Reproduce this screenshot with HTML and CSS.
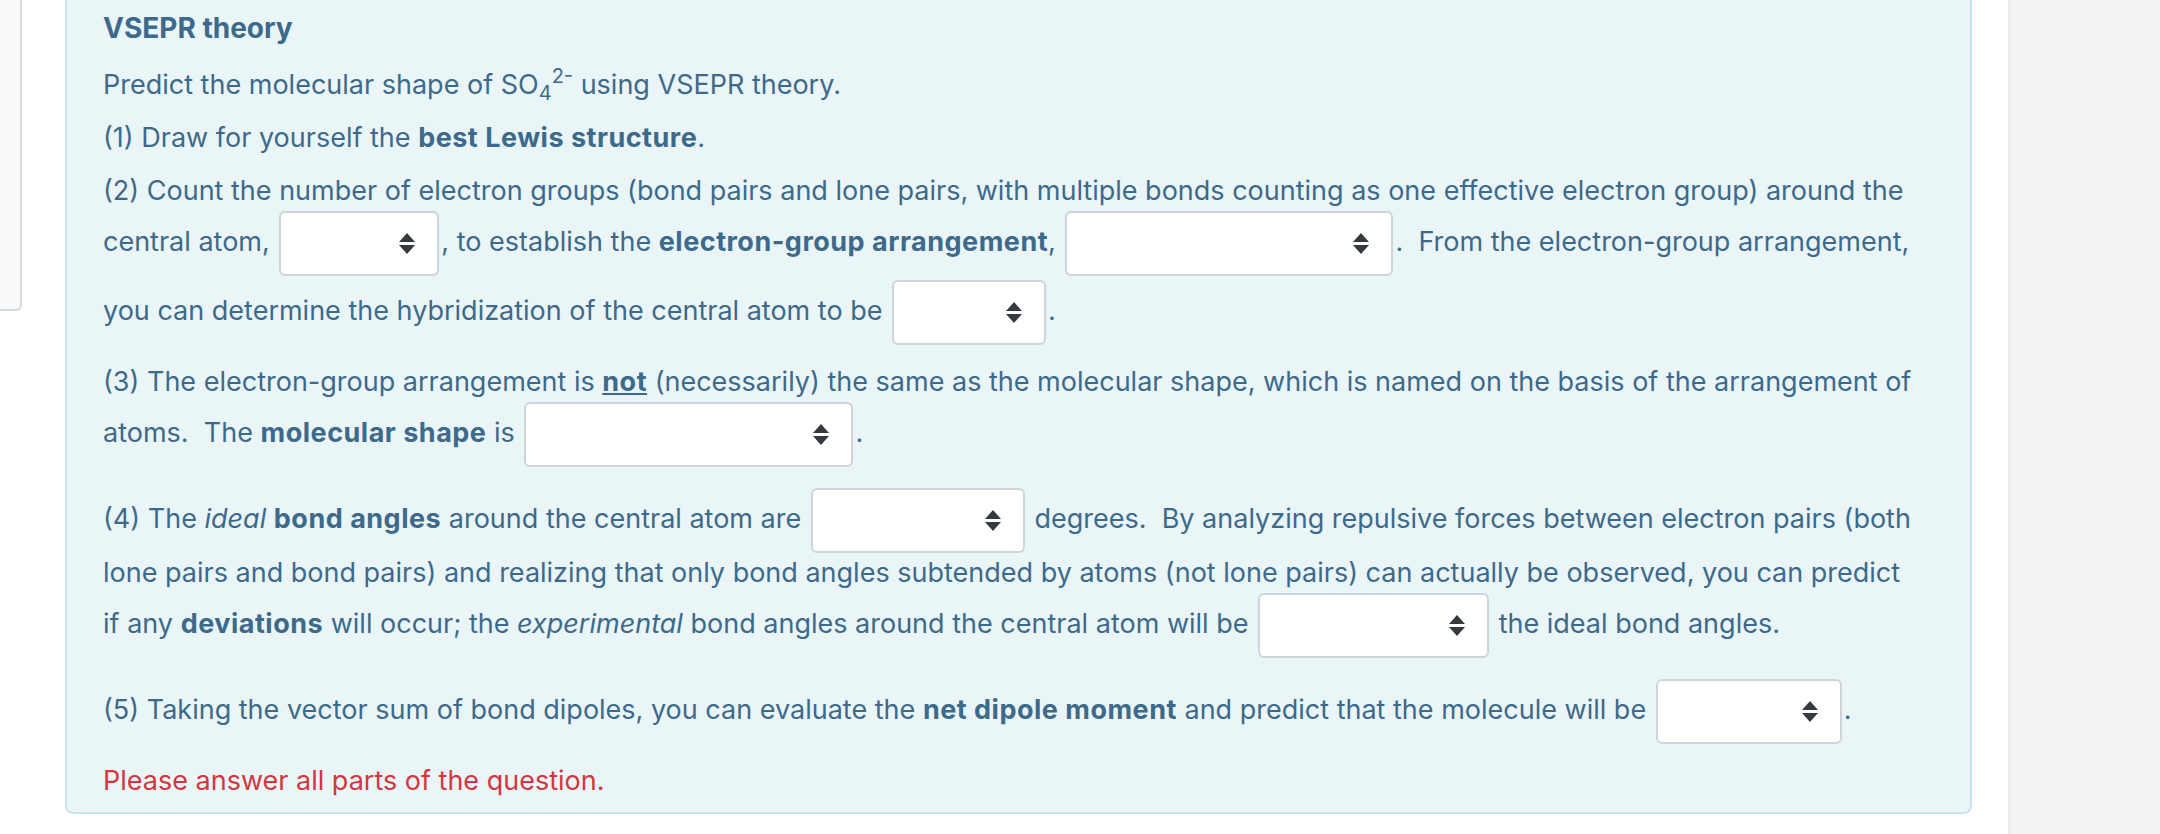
FILE: index.html
```html
<!DOCTYPE html>
<html lang="en">
<head>
<meta charset="utf-8">
<title>VSEPR theory</title>
<link rel="stylesheet" href="styles.css">
</head>
<body>
<div class="page">
  <div class="side-left"></div>
  <div class="question">
    <h4 class="title">VSEPR theory</h4>
    <p>Predict the molecular shape of SO<sub>4</sub><sup>2-</sup> using VSEPR theory.</p>
    <p>(1) Draw for yourself the <b>best Lewis structure</b>.</p>
    <p>(2) Count the number of electron groups (bond pairs and lone pairs, with multiple bonds counting as one effective electron group) around the<br>central atom, <span class="sel w160"><svg class="arr" width="16" height="21" viewBox="0 0 16 21"><path d="M8 0L16 9H0Z M0 12H16L8 21Z" fill="#343a40"/></svg></span>, to establish the <b>electron-group arrangement</b>, <span class="sel w328"><svg class="arr" width="16" height="21" viewBox="0 0 16 21"><path d="M8 0L16 9H0Z M0 12H16L8 21Z" fill="#343a40"/></svg></span>.&nbsp; From the electron-group arrangement,<br>you can determine the hybridization of the central atom to be <span class="sel w154"><svg class="arr" width="16" height="21" viewBox="0 0 16 21"><path d="M8 0L16 9H0Z M0 12H16L8 21Z" fill="#343a40"/></svg></span>.</p>
    <p>(3) The electron-group arrangement is <b><u>not</u></b> (necessarily) the same as the molecular shape, which is named on the basis of the arrangement of<br>atoms.&nbsp; The <b>molecular shape</b> is <span class="sel w329"><svg class="arr" width="16" height="21" viewBox="0 0 16 21"><path d="M8 0L16 9H0Z M0 12H16L8 21Z" fill="#343a40"/></svg></span>.</p>
    <p>(4) The <i>ideal</i> <b>bond angles</b> around the central atom are <span class="sel w214"><svg class="arr" width="16" height="21" viewBox="0 0 16 21"><path d="M8 0L16 9H0Z M0 12H16L8 21Z" fill="#343a40"/></svg></span> degrees.&nbsp; By analyzing repulsive forces between electron pairs (both<br>lone pairs and bond pairs) and realizing that only bond angles subtended by atoms (not lone pairs) can actually be observed, you can predict<br>if any <b>deviations</b> will occur; the <i>experimental</i> bond angles around the central atom will be <span class="sel w231"><svg class="arr" width="16" height="21" viewBox="0 0 16 21"><path d="M8 0L16 9H0Z M0 12H16L8 21Z" fill="#343a40"/></svg></span> the ideal bond angles.</p>
    <p>(5) Taking the vector sum of bond dipoles, you can evaluate the <b>net dipole moment</b> and predict that the molecule will be <span class="sel w186"><svg class="arr" width="16" height="21" viewBox="0 0 16 21"><path d="M8 0L16 9H0Z M0 12H16L8 21Z" fill="#343a40"/></svg></span>.</p>
    <p class="warn">Please answer all parts of the question.</p>
  </div>
  <div class="side-right"></div>
</div>
</body>
</html>
```

FILE: styles.css
```css
html, body {
  margin: 0;
  padding: 0;
  background: #ffffff;
}
.page {
  display: flex;
  align-items: flex-start;
  height: 834px;
  overflow: hidden;
  font-family: Inter, "Liberation Sans", sans-serif;
  font-size: 27px;
  line-height: 36px;
  color: #3d6a8a;
}
.side-left {
  width: 20px;
  height: 309px;
  flex: none;
  background: #f8f9fa;
  border-right: 2px solid #d6dadd;
  border-bottom: 2px solid #d6dadd;
  border-bottom-right-radius: 6px;
}
.question {
  flex: none;
  width: 1851px;
  margin-left: 43px;
  padding: 10px 16px 13px 36px;
  background: #eaf5f8;
  border: 2px solid #c8e4ec;
  border-top: none;
  border-radius: 0 0 8px 8px;
}
.title {
  margin: 0 0 21px 0;
  font-size: 28px;
  font-weight: 700;
  line-height: 36px;
}
.question p {
  margin: 0 0 17px 0;
}
.question p.warn {
  margin: 0;
  color: #d2373f;
}
sub, sup {
  font-size: 20px;
  line-height: 0;
  position: relative;
  vertical-align: baseline;
}
sub { bottom: -6px; }
sup { top: -11px; }
b {
  font-weight: 700;
  letter-spacing: 0.5px;
}
.sel {
  display: inline-flex;
  align-items: center;
  justify-content: flex-end;
  box-sizing: border-box;
  height: 65px;
  margin: 2px 2px;
  padding-right: 22px;
  vertical-align: middle;
  background: #ffffff;
  border: 2px solid #ced4da;
  border-radius: 6px;
}
.w160 { width: 160px; }
.w328 { width: 328px; }
.w154 { width: 154px; }
.w329 { width: 329px; }
.w214 { width: 214px; }
.w231 { width: 231px; }
.w186 { width: 186px; }
.arr { display: block; }
.side-right {
  flex: 1;
  height: 834px;
  margin-left: 36px;
  background: #f3f3f3;
  border-left: 2px solid #ebebeb;
}
```
